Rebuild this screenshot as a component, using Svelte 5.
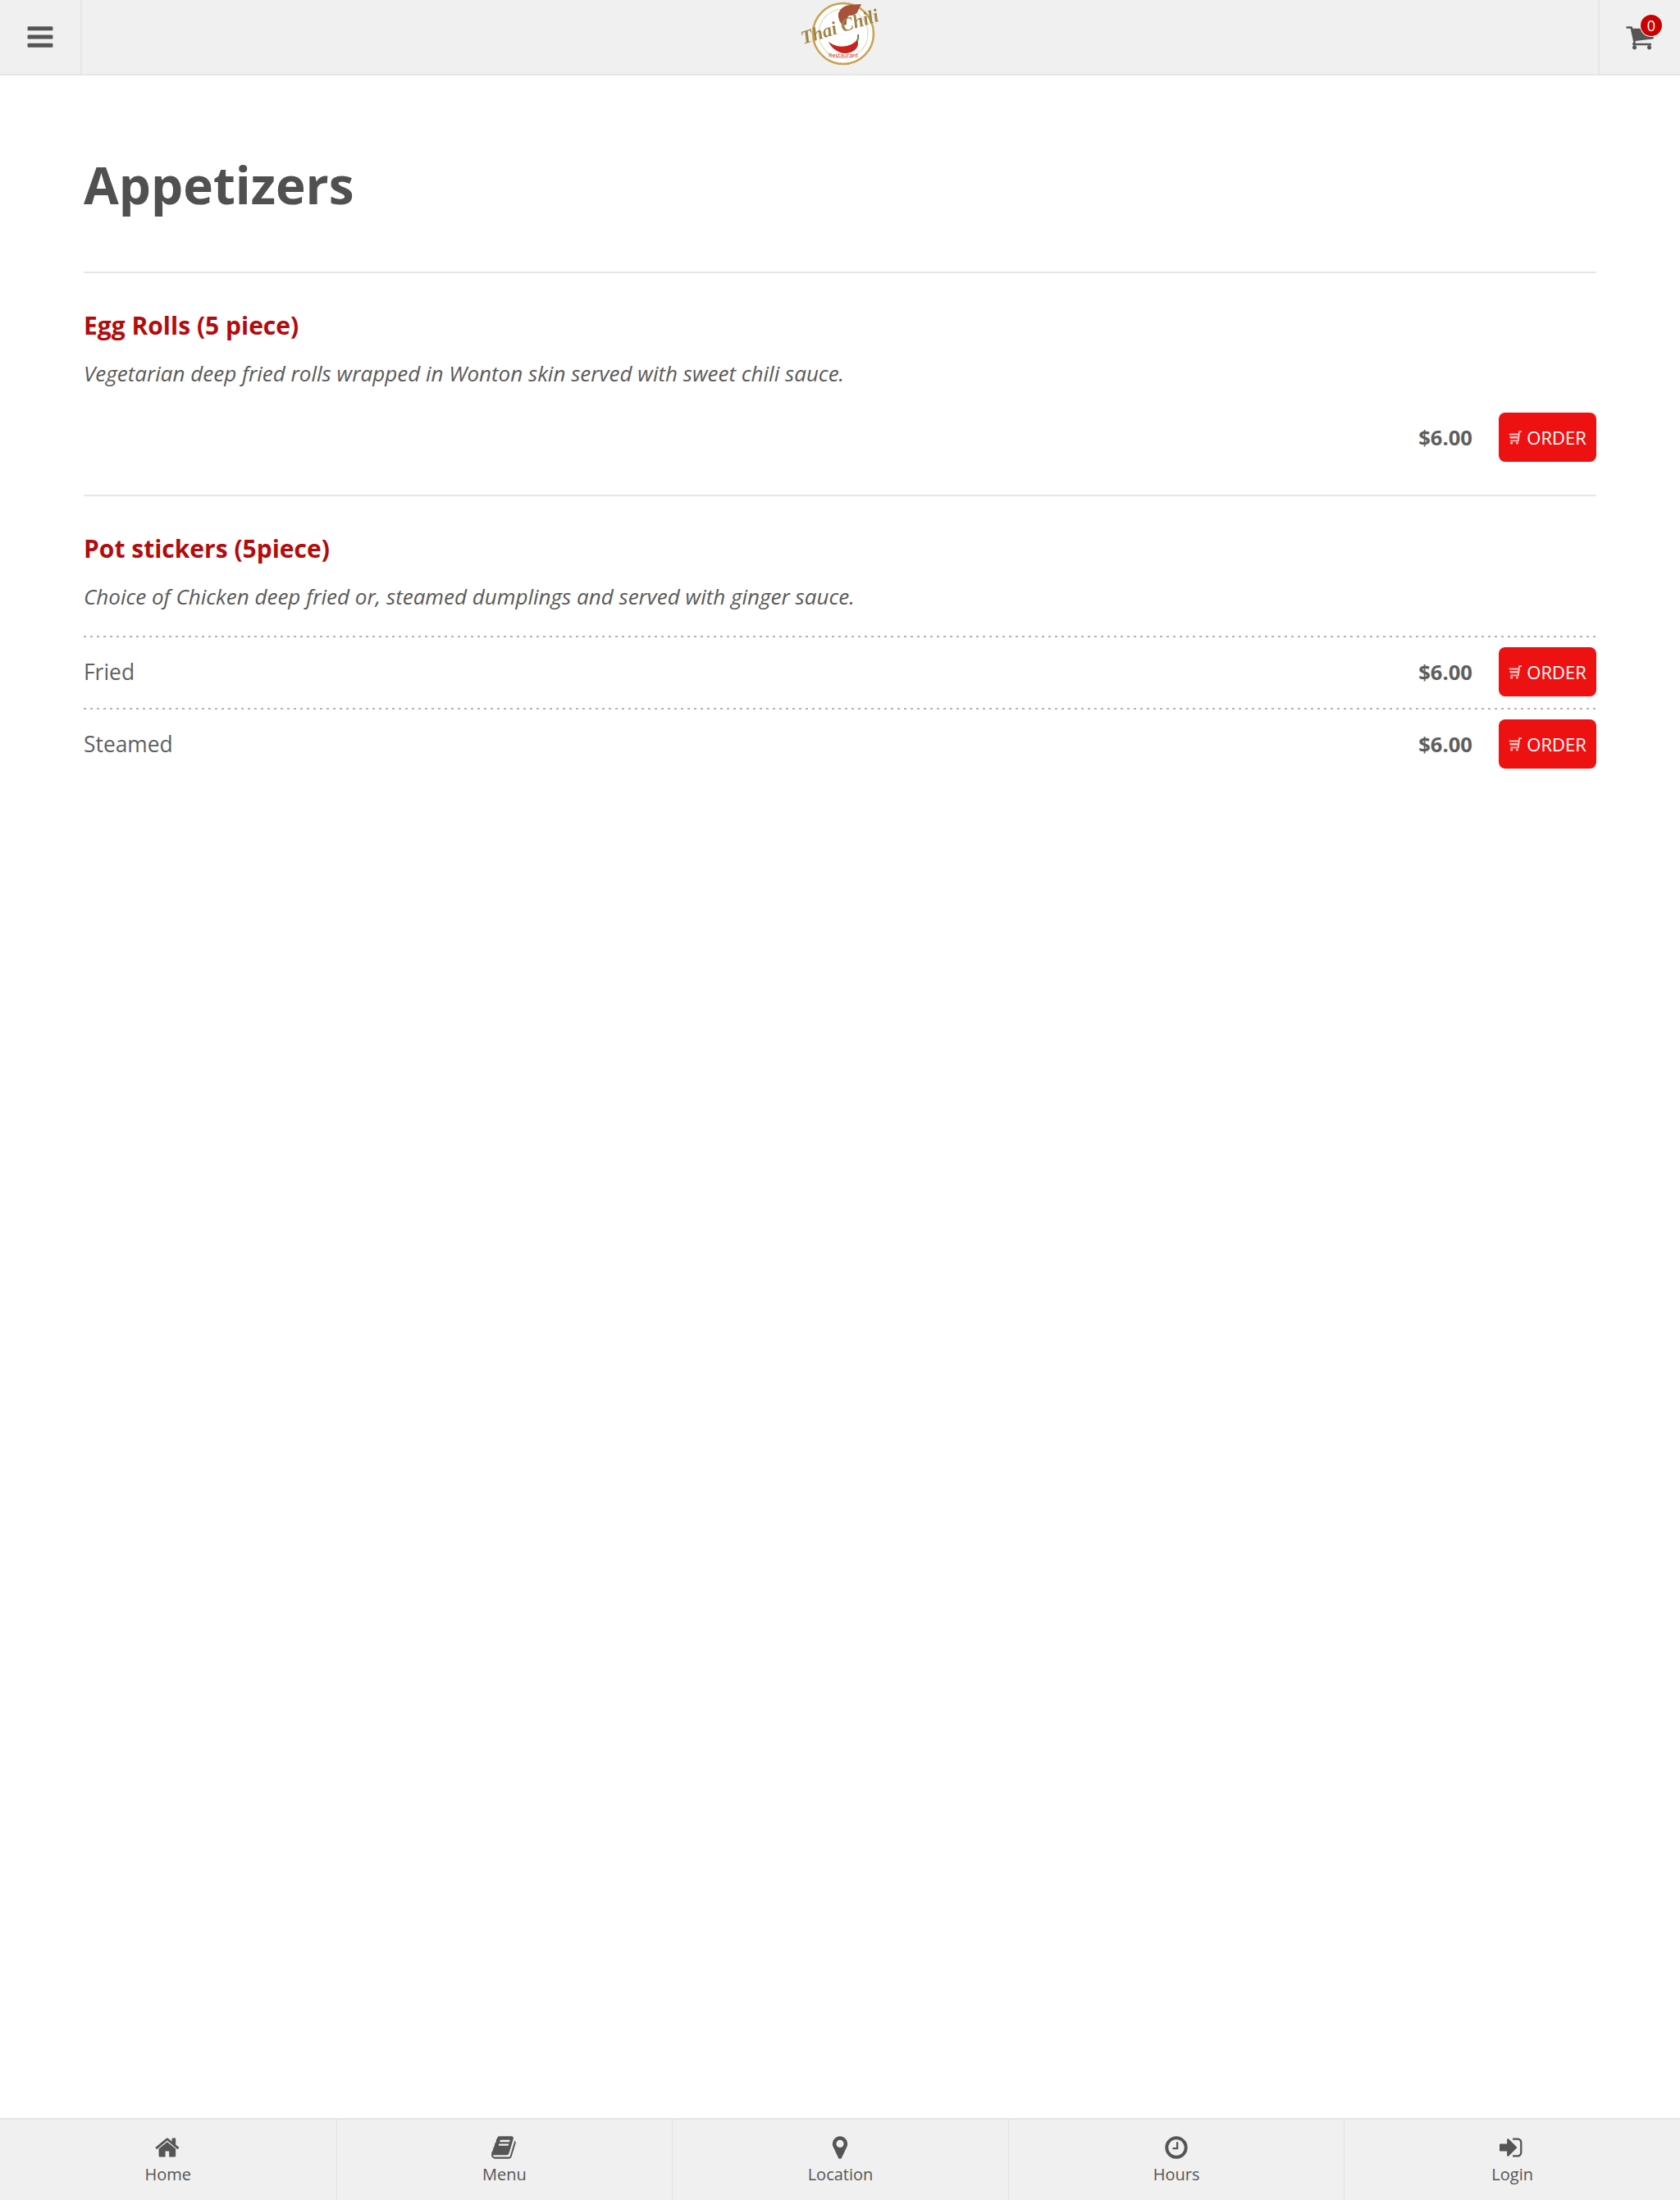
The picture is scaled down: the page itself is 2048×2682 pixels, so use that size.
<script>
  const icons = {
    bars: "M1664 1344v128q0 26-19 45t-45 19h-1408q-26 0-45-19t-19-45v-128q0-26 19-45t45-19h1408q26 0 45 19t19 45zm0-512v128q0 26-19 45t-45 19h-1408q-26 0-45-19t-19-45v-128q0-26 19-45t45-19h1408q26 0 45 19t19 45zm0-512v128q0 26-19 45t-45 19h-1408q-26 0-45-19t-19-45v-128q0-26 19-45t45-19h1408q26 0 45 19t19 45z",
    cart: "M704 1536q0 52-38 90t-90 38-90-38-38-90 38-90 90-38 90 38 38 90zm896 0q0 52-38 90t-90 38-90-38-38-90 38-90 90-38 90 38 38 90zm128-1088v512q0 24-16.5 42.5t-40.5 21.5l-1044 122q13 60 13 70 0 16-24 64h920q26 0 45 19t19 45-19 45-45 19h-1024q-26 0-45-19t-19-45q0-11 8-31.5t16-36 21.5-40 15.5-29.5l-177-823h-204q-26 0-45-19t-19-45 19-45 45-19h256q16 0 28.5 6.5t19.5 15.5 13 24.5 8 26 5.5 29.5 4.5 26h1201q26 0 45 19t19 45z",
    home: "M1408 992v480q0 26-19 45t-45 19h-384v-384h-256v384h-384q-26 0-45-19t-19-45v-480q0-1 .5-3t.5-3l575-474 575 474q1 2 1 6zm223-69l-62 74q-8 9-21 11h-3q-13 0-21-7l-692-577-692 577q-12 8-24 7-13-2-21-11l-62-74q-8-10-7-23.5t11-21.5l719-599q32-26 76-26t76 26l244 204v-195q0-14 9-23t23-9h192q14 0 23 9t9 23v408l219 182q10 8 11 21.5t-7 23.5z",
    book: "M1639 478q40 57 18 129l-275 906q-19 64-76.5 107.5t-122.5 43.5h-923q-77 0-148.5-53.5t-99.5-131.5q-24-67-2-127 0-4 3-27t4-37q1-8-3-21.5t-3-19.5q2-11 8-21t16.5-23.5 16.5-23.5q23-38 45-91.5t30-91.5q3-10 .5-30t-.5-28q3-11 17-28t17-23q21-36 42-92t25-90q1-9-2.5-32t.5-28q4-13 22-30.5t22-22.5q19-26 42.5-84.5t27.5-96.5q1-8-3-25.5t-2-26.5q2-8 9-18t18-23 17-21q8-12 16.5-30.5t15-35 16-36 19.5-32 26.5-23.5 36-11.5 47.5 5.5l-1 3q38-9 51-9h761q74 0 114 56t18 130l-274 906q-36 119-71.5 153.5t-128.5 34.5h-869q-27 0-38 15-11 16-1 43 24 70 144 70h923q29 0 56-15.5t35-41.5l300-987q7-22 5-57 38 15 59 43zm-1064 2q-4 13 2 22.5t20 9.5h608q13 0 25.5-9.5t16.5-22.5l21-64q4-13-2-22.5t-20-9.5h-608q-13 0-25.5 9.5t-16.5 22.5zm-83 256q-4 13 2 22.5t20 9.5h608q13 0 25.5-9.5t16.5-22.5l21-64q4-13-2-22.5t-20-9.5h-608q-13 0-25.5 9.5t-16.5 22.5z",
    marker: "M1152 640q0-106-75-181t-181-75-181 75-75 181 75 181 181 75 181-75 75-181zm256 0q0 109-33 179l-364 774q-16 33-47.5 52t-67.5 19-67.5-19-46.5-52l-365-774q-33-70-33-179 0-212 150-362t362-150 362 150 150 362z",
    clock: "M1024 544v448q0 14-9 23t-23 9h-320q-14 0-23-9t-9-23v-64q0-14 9-23t23-9h224v-352q0-14 9-23t23-9h64q14 0 23 9t9 23zm416 352q0-148-73-273t-198-198-273-73-273 73-198 198-73 273 73 273 198 198 273 73 273-73 198-198 73-273zm224 0q0 209-103 385.5t-279.5 279.5-385.5 103-385.5-103-279.5-279.5-103-385.5 103-385.5 279.5-279.5 385.5-103 385.5 103 279.5 279.5 103 385.5z",
    signin: "M1184 896q0 26-19 45l-544 544q-19 19-45 19t-45-19-19-45v-288h-448q-26 0-45-19t-19-45v-384q0-26 19-45t45-19h448v-288q0-26 19-45t45-19 45 19l544 544q19 19 19 45zm352-352v704q0 119-84.5 203.5t-203.5 84.5h-320q-13 0-22.5-9.5t-9.5-22.5q0-4-1-20t-.5-26.5 3-23.5 10-19.5 20.5-6.5h320q66 0 113-47t47-113v-704q0-66-47-113t-113-47h-312l-11.5-1-11.5-3-8-5.5-7-9-2-13.5q0-4-1-20t-.5-26.5 3-23.5 10-19.5 20.5-6.5h320q119 0 203.5 84.5t84.5 203.5z",
  };

  const items = [
    {
      name: "Egg Rolls (5 piece)",
      desc: "Vegetarian deep fried rolls wrapped in Wonton skin served with sweet chili sauce.",
      price: "$6.00",
    },
    {
      name: "Pot stickers (5piece)",
      desc: "Choice of Chicken deep fried or, steamed dumplings and served with ginger sauce.",
      options: [
        { label: "Fried", price: "$6.00" },
        { label: "Steamed", price: "$6.00" },
      ],
    },
  ];

  const tabs = [
    { label: "Home", icon: "home" },
    { label: "Menu", icon: "book" },
    { label: "Location", icon: "marker" },
    { label: "Hours", icon: "clock" },
    { label: "Login", icon: "signin" },
  ];
</script>

{#snippet orderButton()}
  <button class="order">
    <svg class="order-icon" viewBox="0 0 16 17">
      <path d="M16 1.2h-2.8L11.8 12.4H2.4" fill="none" stroke-width="1.8" />
      <path d="M.6 3.4h11.7l-.3 2H1zM1.2 7h10.6l-.4 2.6H2z" stroke="none" />
      <circle cx="3.6" cy="15" r="1.6" stroke="none" />
      <circle cx="10.4" cy="15" r="1.6" stroke="none" />
    </svg>
    ORDER
  </button>
{/snippet}

<div class="page">
  <header class="topbar">
    <div class="menu-btn">
      <svg class="top-icon" viewBox="0 0 1792 1792"><path d={icons.bars} /></svg>
    </div>
    <div class="logo">
      <svg viewBox="0 0 100 84" width="100" height="84">
        <g class="soft">
          <circle cx="54" cy="41" r="37" fill="#fff" stroke="#c9a24f" stroke-width="2.5" />
          <circle cx="54" cy="41" r="30" fill="none" stroke="#e6dfd3" stroke-width="1.5" />
          <path d="M48 16q4-9 14-10l14-1-3 6q-3 9-12 8-4 4-3 11l-5 1q-6-7-5-15z" fill="#a8523c" />
          <path d="M36 51q11 8 22 5 9-2 13-8 3 8-3 13-8 6-18 3-10-4-14-13z" fill="#c8241f" />
          <path d="M71 50q2-4 1-8" fill="none" stroke="#5a8a3a" stroke-width="2" />
          <text x="5" y="54" class="logo-text" transform="rotate(-17 5 54)">Thai Chili</text>
          <text x="54" y="70" class="logo-sub" text-anchor="middle">Restaurant</text>
        </g>
      </svg>
    </div>
    <div class="cart-btn">
      <svg class="top-icon" viewBox="0 0 1792 1792"><path d={icons.cart} /></svg>
      <span class="badge">0</span>
    </div>
  </header>

  <main class="content">
    <h1>Appetizers</h1>

    {#each items as item}
      <section class="item">
        <h2>{item.name}</h2>
        <p class="desc">{item.desc}</p>
        {#if item.options}
          <div class="options">
            {#each item.options as opt}
              <div class="row option">
                <span class="label">{opt.label}</span>
                <span class="price">{opt.price}</span>
                {@render orderButton()}
              </div>
            {/each}
          </div>
        {:else}
          <div class="row single">
            <span class="label"></span>
            <span class="price">{item.price}</span>
            {@render orderButton()}
          </div>
        {/if}
      </section>
    {/each}
  </main>

  <nav class="tabs">
    {#each tabs as tab}
      <div class="tab">
        <svg class="tab-icon" viewBox="0 0 1792 1792"><path d={icons[tab.icon]} /></svg>
        <span>{tab.label}</span>
      </div>
    {/each}
  </nav>
</div>

<style>
  :global(body) {
    margin: 0;
    background: #fff;
  }

  .page {
    height: 2682px;
    display: flex;
    flex-direction: column;
    font-family: "Open Sans", "Liberation Sans", sans-serif;
    color: #555;
  }

  /* top bar */
  .topbar {
    height: 90px;
    flex: none;
    display: flex;
    justify-content: space-between;
    background: #f0f0f0;
    border-bottom: 2px solid #e6e6e6;
  }

  .menu-btn,
  .cart-btn {
    width: 98px;
    display: flex;
    align-items: center;
    justify-content: center;
    position: relative;
  }

  .menu-btn {
    border-right: 2px solid #e6e6e6;
  }

  .cart-btn {
    border-left: 2px solid #e6e6e6;
  }

  .top-icon {
    width: 36px;
    height: 36px;
    fill: #555;
  }

  .badge {
    position: absolute;
    top: 18px;
    left: 50px;
    width: 26px;
    height: 26px;
    border-radius: 50%;
    background: #cc0000;
    box-shadow: 0 0 0 1px #f6f6f6;
    color: #fff;
    font-size: 18px;
    line-height: 26px;
    text-align: center;
  }

  .logo {
    height: 84px;
  }

  .soft {
    filter: blur(0.6px);
  }

  .logo-text {
    font-family: "Liberation Serif", serif;
    font-style: italic;
    font-weight: bold;
    font-size: 23px;
    fill: #a08448;
  }

  .logo-sub {
    font-family: "Open Sans", sans-serif;
    font-size: 7px;
    fill: #c8341f;
  }

  /* content */
  .content {
    flex: 1;
    padding: 0 102px;
  }

  h1 {
    margin: 0;
    height: 239px;
    box-sizing: border-box;
    padding-top: 89px;
    font-size: 62px;
    line-height: 88px;
    font-weight: 700;
    color: #505050;
  }

  .item {
    border-top: 2px solid #e6e6e6;
    padding-top: 42px;
  }

  h2 {
    margin: 0;
    font-size: 30px;
    line-height: 44px;
    font-weight: 700;
    color: #b30c0c;
  }

  .desc {
    margin: 14px 0 0;
    font-size: 26px;
    line-height: 44px;
    font-style: italic;
    color: #5a5a5a;
  }

  .row {
    display: flex;
    align-items: center;
  }

  .single {
    height: 60px;
    margin-top: 26px;
    padding-bottom: 40px;
  }

  .options {
    margin-top: 26px;
  }

  .option {
    height: 88px;
    background-image: linear-gradient(to right, #b4b4b4 3px, transparent 3px);
    background-size: 8px 2px;
    background-repeat: repeat-x;
  }

  .label {
    flex: 1;
    font-size: 26.4px;
    color: #5f5f5f;
  }

  .price {
    font-size: 25.6px;
    font-weight: 700;
    color: #5f5f5f;
    margin-right: 32px;
  }

  .order {
    width: 119px;
    height: 60px;
    padding: 0;
    border: none;
    border-radius: 8px;
    background: #ee1111;
    color: #fff;
    font-family: inherit;
    font-size: 22px;
    display: flex;
    align-items: center;
    justify-content: center;
    gap: 6px;
  }

  .order-icon {
    width: 16px;
    height: 17px;
    fill: #ffc9c4;
    stroke: #ffc9c4;
  }

  /* bottom tabs */
  .tabs {
    height: 98px;
    flex: none;
    display: grid;
    grid-template-columns: repeat(5, 1fr);
    background: #f0f0f0;
    border-top: 2px solid #e6e6e6;
  }

  .tab {
    display: flex;
    flex-direction: column;
    align-items: center;
    padding-top: 18px;
    font-size: 20px;
    color: #555;
    border-left: 1px solid #e2e2e2;
  }

  .tab:first-child {
    border-left: none;
  }

  .tab-icon {
    width: 32px;
    height: 32px;
    fill: #555;
    margin-bottom: 3px;
  }
</style>
